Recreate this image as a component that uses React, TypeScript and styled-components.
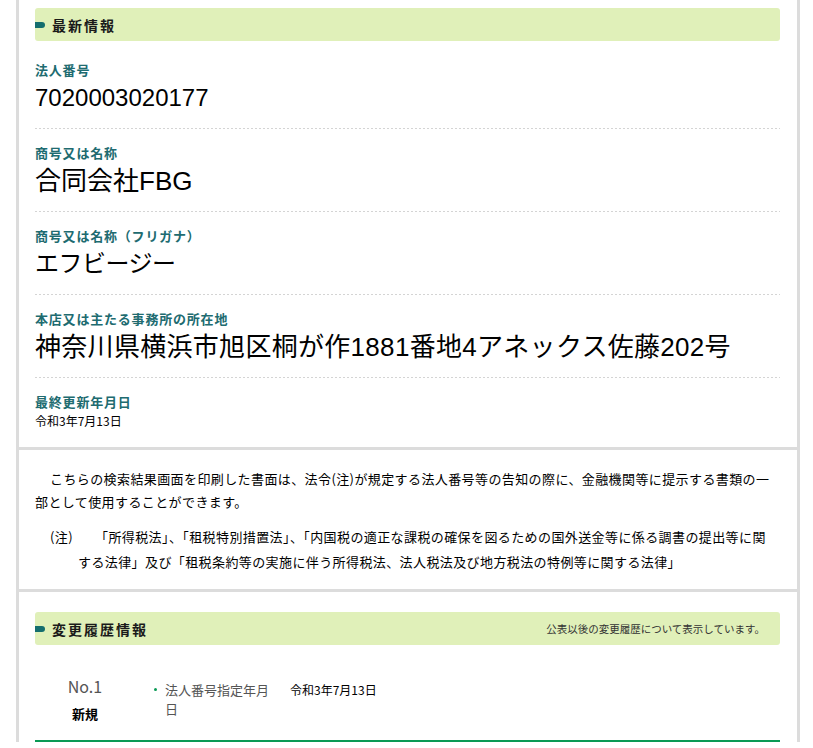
import React from "react";
import styled, { createGlobalStyle } from "styled-components";

const Global = createGlobalStyle`
  html, body { margin: 0; padding: 0; background: #fff; }
  body { font-family: "Noto Sans CJK JP", "Noto Sans", sans-serif; color: #000; }
`;

const Frame = styled.div`
  margin-left: 16px;
  width: 778px;
  border-left: 3px solid #dcdcdc;
  border-right: 3px solid #dcdcdc;
`;

const Section = styled.section<{ $top: number; $bottom: number; $last?: boolean }>`
  padding: ${(p) => p.$top}px 17px ${(p) => p.$bottom}px 16px;
  border-bottom: ${(p) => (p.$last ? "none" : "3px solid #dcdcdc")};
`;

const HeadBar = styled.div`
  position: relative;
  height: 33px;
  background: #e0f0b9;
  border-radius: 3px;
  display: flex;
  align-items: center;
  justify-content: space-between;
  padding: 0 15px 0 17px;
  &::before {
    content: "";
    position: absolute;
    left: 0;
    top: 14px;
    width: 10px;
    height: 6px;
    background: #146e6e;
    border-radius: 0 3px 3px 0;
  }
`;

const HeadTitle = styled.h2`
  margin: 0;
  font-size: 14px;
  font-weight: 700;
  color: #1a1a1a;
  letter-spacing: 2px;
`;

const HeadNote = styled.span`
  font-size: 10.5px;
  color: #333;
  letter-spacing: 0;
`;

const Field = styled.div<{ $first?: boolean; $last?: boolean }>`
  padding-top: ${(p) => (p.$first ? 19 : 14)}px;
  padding-bottom: ${(p) => (p.$last ? 17 : 13)}px;
  background-image: ${(p) =>
    p.$last ? "none" : "linear-gradient(to right, #d4d4d4 2px, transparent 2px)"};
  background-size: 4px 1px;
  background-repeat: repeat-x;
  background-position: left bottom;
`;

const Label = styled.div`
  font-size: 13px;
  line-height: 20px;
  font-weight: 700;
  color: #206b70;
  letter-spacing: 0.8px;
`;

const Value = styled.div<{ $size: number; $spacing?: number }>`
  font-family: "Liberation Sans", "Noto Sans CJK JP", sans-serif;
  font-size: ${(p) => p.$size}px;
  letter-spacing: ${(p) => p.$spacing ?? 0}px;
  line-height: 36px;
  color: #000;
  white-space: nowrap;
`;

const SmallValue = styled.div`
  font-size: 12px;
  line-height: 18px;
`;

const Para = styled.p`
  margin: 0;
  font-size: 13px;
  line-height: 23px;
  text-indent: 15px;
  letter-spacing: 0.4px;
`;

const Note = styled.p`
  margin: 11px 0 0;
  padding: 0 10px 0 43px;
  text-indent: -28px;
  font-size: 13px;
  line-height: 25px;
  letter-spacing: 0.4px;
`;

const NoteMark = styled.span`
  display: inline-block;
  width: 45px;
  text-indent: 0;
`;

const Item = styled.div`
  display: grid;
  grid-template-columns: 100px 1fr;
  padding: 31px 0 16px;
  border-bottom: 2px solid #0a9a55;
`;

const ItemHead = styled.div`
  display: flex;
  flex-direction: column;
  align-items: center;
`;

const ItemNo = styled.div`
  font-size: 16px;
  line-height: 20px;
  color: #555;
`;

const ItemKind = styled.div`
  margin-top: 8px;
  font-size: 13px;
  line-height: 20px;
  font-weight: 700;
`;

const Dl = styled.dl`
  margin: 4px 0 0 15px;
  display: grid;
  grid-template-columns: 140px 1fr;
  align-items: start;
`;

const Dt = styled.dt`
  position: relative;
  padding-left: 15px;
  width: 108px;
  font-size: 13px;
  line-height: 19px;
  color: #555;
  &::before {
    content: "";
    position: absolute;
    left: 4px;
    top: 8px;
    width: 3px;
    height: 3px;
    border-radius: 50%;
    background: #0a9a55;
  }
`;

const Dd = styled.dd`
  margin: 0;
  font-size: 12px;
  line-height: 19px;
`;

export default function App() {
  return (
    <>
      <Global />
      <Frame>
        <Section $top={8} $bottom={0}>
          <HeadBar>
            <HeadTitle>最新情報</HeadTitle>
          </HeadBar>
          <Field $first>
            <Label>法人番号</Label>
            <Value $size={24}>7020003020177</Value>
          </Field>
          <Field>
            <Label>商号又は名称</Label>
            <Value $size={26}>合同会社FBG</Value>
          </Field>
          <Field>
            <Label>商号又は名称（フリガナ）</Label>
            <Value $size={24} $spacing={-0.5}>エフビージー</Value>
          </Field>
          <Field>
            <Label>本店又は主たる事務所の所在地</Label>
            <Value $size={26} $spacing={0.3}>
              神奈川県横浜市旭区桐が作1881番地4アネックス佐藤202号
            </Value>
          </Field>
          <Field $last>
            <Label>最終更新年月日</Label>
            <SmallValue>令和3年7月13日</SmallValue>
          </Field>
        </Section>
        <Section $top={17} $bottom={15}>
          <Para>
            こちらの検索結果画面を印刷した書面は、法令(注)が規定する法人番号等の告知の際に、金融機関等に提示する書類の一部として使用することができます。
          </Para>
          <Note>
            <NoteMark>(注)</NoteMark>
            「所得税法」、「租税特別措置法」、「内国税の適正な課税の確保を図るための国外送金等に係る調書の提出等に関する法律」及び「租税条約等の実施に伴う所得税法、法人税法及び地方税法の特例等に関する法律」
          </Note>
        </Section>
        <Section $top={20} $bottom={0} $last>
          <HeadBar>
            <HeadTitle>変更履歴情報</HeadTitle>
            <HeadNote>公表以後の変更履歴について表示しています。</HeadNote>
          </HeadBar>
          <Item>
            <ItemHead>
              <ItemNo>No.1</ItemNo>
              <ItemKind>新規</ItemKind>
            </ItemHead>
            <Dl>
              <Dt>法人番号指定年月日</Dt>
              <Dd>令和3年7月13日</Dd>
            </Dl>
          </Item>
        </Section>
      </Frame>
    </>
  );
}
